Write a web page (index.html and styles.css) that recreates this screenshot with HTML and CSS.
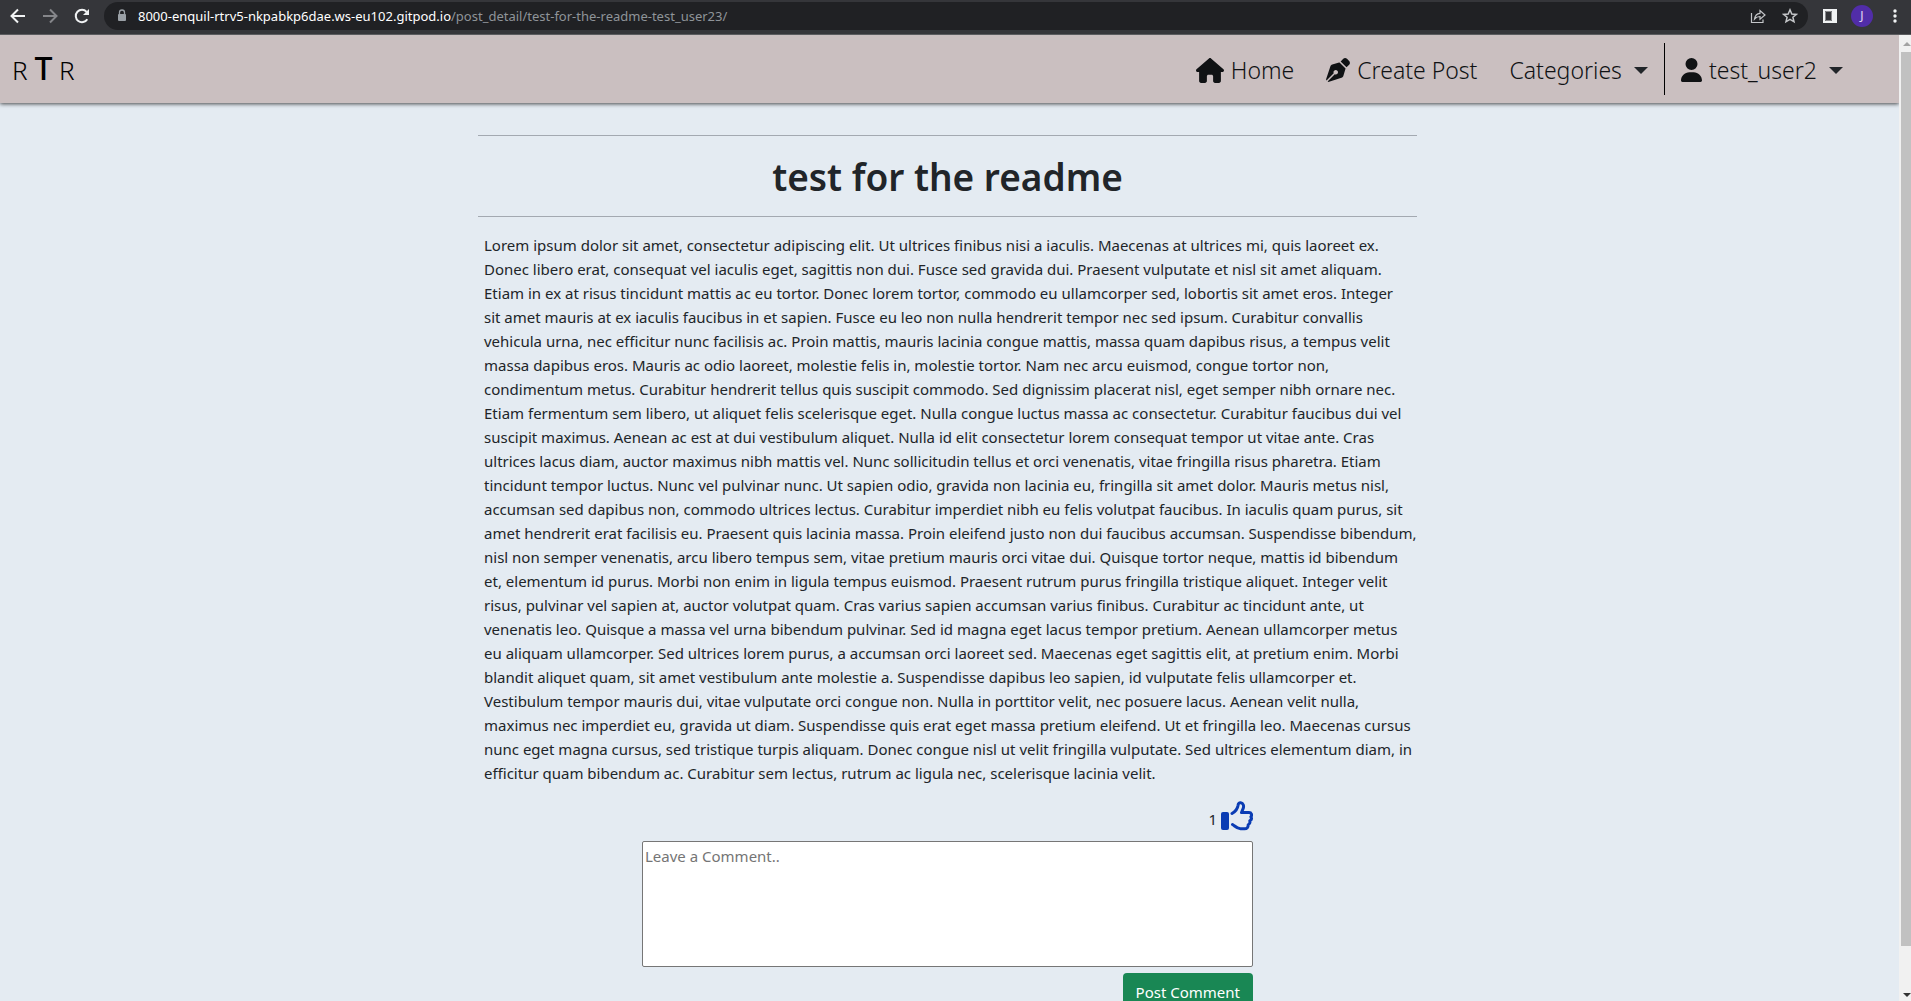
FILE: index.html
```html
<!DOCTYPE html>
<html lang="en">
<head>
<meta charset="utf-8">
<meta name="viewport" content="width=device-width, initial-scale=1">
<title>test for the readme</title>
<link rel="stylesheet" href="styles.css">
</head>
<body>
<div class="browser-bar">
  <button class="tool back" aria-label="Back"><svg width="16" height="16" viewBox="0 0 16 16"><path d="M15 8H2M8 1.500L1.500 8L8 14.500" fill="none" stroke="currentColor" stroke-width="2"/></svg></button>
  <button class="tool forward" aria-label="Forward"><svg width="16" height="16" viewBox="0 0 16 16"><path d="M1 8H14M8 1.500L14.500 8L8 14.500" fill="none" stroke="currentColor" stroke-width="2"/></svg></button>
  <button class="tool reload" aria-label="Reload"><svg width="16" height="16" viewBox="0 0 16 16"><path d="M13.300 11.200A6.200 6.200 0 1 1 12.600 3.800" fill="none" stroke="currentColor" stroke-width="2"/><path d="M15 1V7H9Z" fill="currentColor"/></svg></button>
  <div class="address">
    <svg class="lock" width="10" height="13" viewBox="0 0 10 13"><path d="M2.500 6V3.500a2.500 2.500 0 0 1 5 0V6" fill="none" stroke="currentColor" stroke-width="1.300"/><rect x="1" y="5" width="8" height="7" rx="1" fill="currentColor"/></svg>
    <span class="url"><span class="host">8000-enquil-rtrv5-nkpabkp6dae.ws-eu102.gitpod.io</span>/post_detail/test-for-the-readme-test_user23/</span>
    <button class="tool" aria-label="Share"><svg width="16" height="16" viewBox="0 0 16 16"><path d="M1.500 5V14.500H13V11.500" fill="none" stroke="currentColor" stroke-width="1.200"/><path d="M4.500 11C5 7.500 7 5.500 10 5.300V2.500L15 7L10 11.300V8.500C7.500 8.500 6 9.300 4.500 11Z" fill="none" stroke="currentColor" stroke-width="1.200"/></svg></button>
    <button class="tool" aria-label="Bookmark"><svg width="16" height="16" viewBox="0 0 16 16"><path d="M8 1.800L9.800 6L14.300 6.400L10.900 9.300L12 13.800L8 11.400L4 13.800L5.100 9.300L1.700 6.400L6.200 6Z" fill="none" stroke="currentColor" stroke-width="1.500"/></svg></button>
  </div>
  <button class="tool panel" aria-label="Side panel"><svg width="14" height="14" viewBox="0 0 14 14"><path fill-rule="evenodd" d="M0 0H14V14H0ZM2 2V12H9V2Z" fill="currentColor"/><path d="M2.500 2.500H8.500V11.500H2.500Z" fill="none" stroke="#8a8b8e" stroke-width="1"/></svg></button>
  <button class="profile" aria-label="Profile">J</button>
  <button class="tool" aria-label="Menu"><svg width="4" height="14" viewBox="0 0 4 14" fill="currentColor"><circle cx="2" cy="2" r="1.700"/><circle cx="2" cy="7" r="1.700"/><circle cx="2" cy="12" r="1.700"/></svg></button>
</div>
<div class="window">
  <div class="page">
    <header class="site-header">
      <a class="brand" href="#">R <span class="brand-mid">T</span> R</a>
      <nav>
        <ul class="nav-list">
          <li><a class="nav-link" href="#"><svg width="28" height="25" viewBox="0 0 576 512" fill="currentColor"><path d="M575.800 255.500c0 18-15 32.100-32 32.100h-32l.7 160.200c0 2.700-.2 5.400-.5 8.100V472c0 22.100-17.900 40-40 40H392c-22.100 0-40-17.900-40-40V376c0-17.700-14.300-32-32-32h-64c-17.700 0-32 14.300-32 32v96c0 22.100-17.900 40-40 40h-80c-22.100 0-40-17.900-40-40V287.600H32c-18 0-32-14-32-32.100c0-9 3-17 10-24L266.400 8c7-7 15-8 22-8s15 2 21 7L564.800 231.500c8 7 12 15 11 24z"/></svg>Home</a></li>
          <li><a class="nav-link" href="#"><svg width="24" height="24" viewBox="0 0 512 512" fill="currentColor"><path d="M368.400 18.300L312.700 74.100 437.900 199.300l55.700-55.700c21.900-21.900 21.900-57.300 0-79.200L447.600 18.300c-21.900-21.900-57.300-21.900-79.200 0zM288 94.600l-9.200 2.800L134.700 140.600c-19.900 6-35.700 21.200-42.300 41L3.800 445.800c-3.800 11.300-1 23.900 7.300 32.400L164.700 324.700c-3-6.300-4.700-13.300-4.700-20.700c0-26.500 21.500-48 48-48s48 21.500 48 48s-21.500 48-48 48c-7.400 0-14.400-1.700-20.700-4.700L33.700 500.900c8.600 8.300 21.100 11.200 32.400 7.300l264.300-88.600c19.700-6.600 35-22.400 41-42.300l43.200-144.100 2.800-9.200z"/></svg>Create Post</a></li>
          <li><button class="nav-link">Categories<span class="caret"></span></button></li>
          <li class="account"><button class="nav-link"><svg width="21" height="24" viewBox="0 0 448 512" fill="currentColor"><path d="M224 256A128 128 0 1 0 224 0a128 128 0 1 0 0 256zm-45.700 48C79.800 304 0 383.800 0 482.300C0 498.700 13.300 512 29.700 512H418.300c16.400 0 29.700-13.300 29.700-29.700C448 383.800 368.200 304 269.700 304H178.300z"/></svg>test_user2<span class="caret"></span></button></li>
        </ul>
      </nav>
    </header>
    <main class="post">
      <h1 class="post-title">test for the readme</h1>
      <p class="post-body">Lorem ipsum dolor sit amet, consectetur adipiscing elit. Ut ultrices finibus nisi a iaculis. Maecenas at ultrices mi, quis laoreet ex.<br>
Donec libero erat, consequat vel iaculis eget, sagittis non dui. Fusce sed gravida dui. Praesent vulputate et nisl sit amet aliquam.<br>
Etiam in ex at risus tincidunt mattis ac eu tortor. Donec lorem tortor, commodo eu ullamcorper sed, lobortis sit amet eros. Integer<br>
sit amet mauris at ex iaculis faucibus in et sapien. Fusce eu leo non nulla hendrerit tempor nec sed ipsum. Curabitur convallis<br>
vehicula urna, nec efficitur nunc facilisis ac. Proin mattis, mauris lacinia congue mattis, massa quam dapibus risus, a tempus velit<br>
massa dapibus eros. Mauris ac odio laoreet, molestie felis in, molestie tortor. Nam nec arcu euismod, congue tortor non,<br>
condimentum metus. Curabitur hendrerit tellus quis suscipit commodo. Sed dignissim placerat nisl, eget semper nibh ornare nec.<br>
Etiam fermentum sem libero, ut aliquet felis scelerisque eget. Nulla congue luctus massa ac consectetur. Curabitur faucibus dui vel<br>
suscipit maximus. Aenean ac est at dui vestibulum aliquet. Nulla id elit consectetur lorem consequat tempor ut vitae ante. Cras<br>
ultrices lacus diam, auctor maximus nibh mattis vel. Nunc sollicitudin tellus et orci venenatis, vitae fringilla risus pharetra. Etiam<br>
tincidunt tempor luctus. Nunc vel pulvinar nunc. Ut sapien odio, gravida non lacinia eu, fringilla sit amet dolor. Mauris metus nisl,<br>
accumsan sed dapibus non, commodo ultrices lectus. Curabitur imperdiet nibh eu felis volutpat faucibus. In iaculis quam purus, sit<br>
amet hendrerit erat facilisis eu. Praesent quis lacinia massa. Proin eleifend justo non dui faucibus accumsan. Suspendisse bibendum,<br>
nisl non semper venenatis, arcu libero tempus sem, vitae pretium mauris orci vitae dui. Quisque tortor neque, mattis id bibendum<br>
et, elementum id purus. Morbi non enim in ligula tempus euismod. Praesent rutrum purus fringilla tristique aliquet. Integer velit<br>
risus, pulvinar vel sapien at, auctor volutpat quam. Cras varius sapien accumsan varius finibus. Curabitur ac tincidunt ante, ut<br>
venenatis leo. Quisque a massa vel urna bibendum pulvinar. Sed id magna eget lacus tempor pretium. Aenean ullamcorper metus<br>
eu aliquam ullamcorper. Sed ultrices lorem purus, a accumsan orci laoreet sed. Maecenas eget sagittis elit, at pretium enim. Morbi<br>
blandit aliquet quam, sit amet vestibulum ante molestie a. Suspendisse dapibus leo sapien, id vulputate felis ullamcorper et.<br>
Vestibulum tempor mauris dui, vitae vulputate orci congue non. Nulla in porttitor velit, nec posuere lacus. Aenean velit nulla,<br>
maximus nec imperdiet eu, gravida ut diam. Suspendisse quis erat eget massa pretium eleifend. Ut et fringilla leo. Maecenas cursus<br>
nunc eget magna cursus, sed tristique turpis aliquam. Donec congue nisl ut velit fringilla vulputate. Sed ultrices elementum diam, in<br>
efficitur quam bibendum ac. Curabitur sem lectus, rutrum ac ligula nec, scelerisque lacinia velit.</p>
      <form class="comment-form">
        <div class="likes"><span>1</span><button class="like" type="button" aria-label="Like"><svg width="32" height="30" viewBox="0 0 32 30"><rect x="0" y="11" width="8" height="18" rx="2" fill="currentColor"/><path d="M11 12.500C14.500 10.500 16.500 8 17 4.500C17.300 2 18.500 1.500 19.800 1.800C22.300 2.300 23 4.800 22.300 7.200L20.500 11.500H28C30.500 11.500 31.300 14 29.900 15.700C30.800 17.300 30.300 19 28.800 19.900C29.300 21.700 28.600 23 27.200 23.800C27.300 26.200 26 27.700 23.500 27.700H19.500C15.800 27.700 14 25 11.500 23.500" fill="none" stroke="currentColor" stroke-width="3" stroke-linecap="round" stroke-linejoin="round"/></svg></button></div>
        <textarea class="comment" placeholder="Leave a Comment.." aria-label="Leave a comment"></textarea>
        <button class="submit" type="submit">Post Comment</button>
      </form>
    </main>
  </div>
  <div class="scrollbar" aria-hidden="true">
    <span class="arrow arrow-up"></span>
    <span class="thumb"></span>
    <span class="arrow arrow-down"></span>
  </div>
</div>
</body>
</html>
```
FILE: styles.css
```css
* { box-sizing: border-box; }

body {
  margin: 0;
  height: 100vh;
  display: flex;
  flex-direction: column;
  overflow: hidden;
  font-family: "Noto Sans", "Open Sans", sans-serif;
  font-size: 15px;
  line-height: 24px;
  color: #212529;
  background: #e4ebf2;
}

button {
  margin: 0;
  padding: 0;
  border: 0;
  background: none;
  color: inherit;
  font: inherit;
}

svg { display: block; flex: none; }

/* Browser toolbar */
.browser-bar {
  flex: none;
  display: flex;
  align-items: center;
  height: 35px;
  padding: 0 14px 3px 10px;
  background: #35363a;
  border-bottom: 1px solid #5b5c5f;
  color: #f1f3f4;
}

.forward { margin-left: 16px; color: #85868a; }
.reload { margin: 0 14px 0 16px; }

.address {
  flex: 1;
  display: flex;
  align-items: center;
  gap: 16px;
  height: 28px;
  padding: 0 10px 0 13px;
  border-radius: 14px;
  background: #202124;
  color: #c4c6c9;
}

.lock { color: #9aa0a6; }

.url {
  flex: 1;
  margin-left: -5px;
  font-size: 13px;
  white-space: nowrap;
  color: #8f9499;
}

.host { color: #fff; }
.panel { margin: 0 14px 0 15px; }

.profile {
  width: 22px;
  height: 22px;
  margin-right: 20px;
  border-radius: 50%;
  background: #512da8;
  color: #e4dcf5;
  font-size: 12px;
  line-height: 22px;
}

/* Page viewport */
.window {
  flex: 1;
  min-height: 0;
  display: flex;
}

.page {
  flex: 1;
  overflow: hidden;
}

.site-header {
  display: flex;
  align-items: center;
  justify-content: space-between;
  height: 68px;
  padding: 0 56px 0 12px;
  background: #cabfc0;
  box-shadow: 0 1px 4px rgba(0, 0, 0, 0.7);
}

.brand {
  font-size: 26px;
  font-weight: 300;
  color: #000;
  text-decoration: none;
}

.brand-mid { font-size: 32px; font-weight: 500; }

.nav-list {
  display: flex;
  align-items: center;
  gap: 32px;
  margin: 0;
  padding: 0;
  list-style: none;
}

.nav-link {
  display: flex;
  align-items: center;
  gap: 7px;
  height: 52px;
  padding-top: 2px;
  font-size: 23px;
  font-weight: 300;
  color: #101214;
  text-decoration: none;
}

.caret {
  margin-left: 5px;
  border: 7px solid transparent;
  border-top-color: #212529;
  border-bottom: 0;
}

.account {
  margin-left: -16px;
  padding-left: 16px;
  border-left: 1px solid #000;
}

/* Post */
.post {
  width: 943px;
  max-width: 100%;
  margin: 0 auto;
  padding: 32px 4px 0 0;
}

.post-title {
  margin: 0 0 16px;
  padding: 17px 0 15px;
  border-top: 1px solid #a3a9b1;
  border-bottom: 1px solid #a3a9b1;
  font-size: 37px;
  font-weight: 600;
  line-height: 48px;
  text-align: center;
}

.post-body {
  margin: 0;
  padding: 0 6px;
  white-space: nowrap;
}

.comment-form {
  display: flex;
  flex-direction: column;
  align-items: flex-end;
  width: 611px;
  max-width: 100%;
  margin: 16px auto 0;
}

.likes {
  display: flex;
  align-items: flex-end;
  gap: 4px;
  height: 40px;
  padding-bottom: 10px;
}

.like { color: #0a3cb4; }

.comment {
  display: block;
  width: 100%;
  height: 126px;
  padding: 2px;
  border: 1px solid #767676;
  border-radius: 2px;
  background: #fff;
  font: inherit;
  resize: none;
}

.comment::placeholder { color: #757575; }

.submit {
  margin-top: 6px;
  padding: 7px 13px;
  border-radius: 4px;
  background: #198754;
  color: #fff;
}

/* Scrollbar */
.scrollbar {
  flex: none;
  display: flex;
  flex-direction: column;
  align-items: flex-end;
  width: 12px;
  padding: 7px 0 4px;
  background: #f1f1f1;
  overflow: hidden;
}

.thumb {
  flex: 1;
  width: 10px;
  margin: 6px 0 47px;
  background: #c1c1c1;
}

.arrow { border: 4px solid transparent; }
.arrow-up { border-top: 0; border-bottom-color: #a3a3a3; }
.arrow-down { border-bottom: 0; border-top-color: #333; }
```
